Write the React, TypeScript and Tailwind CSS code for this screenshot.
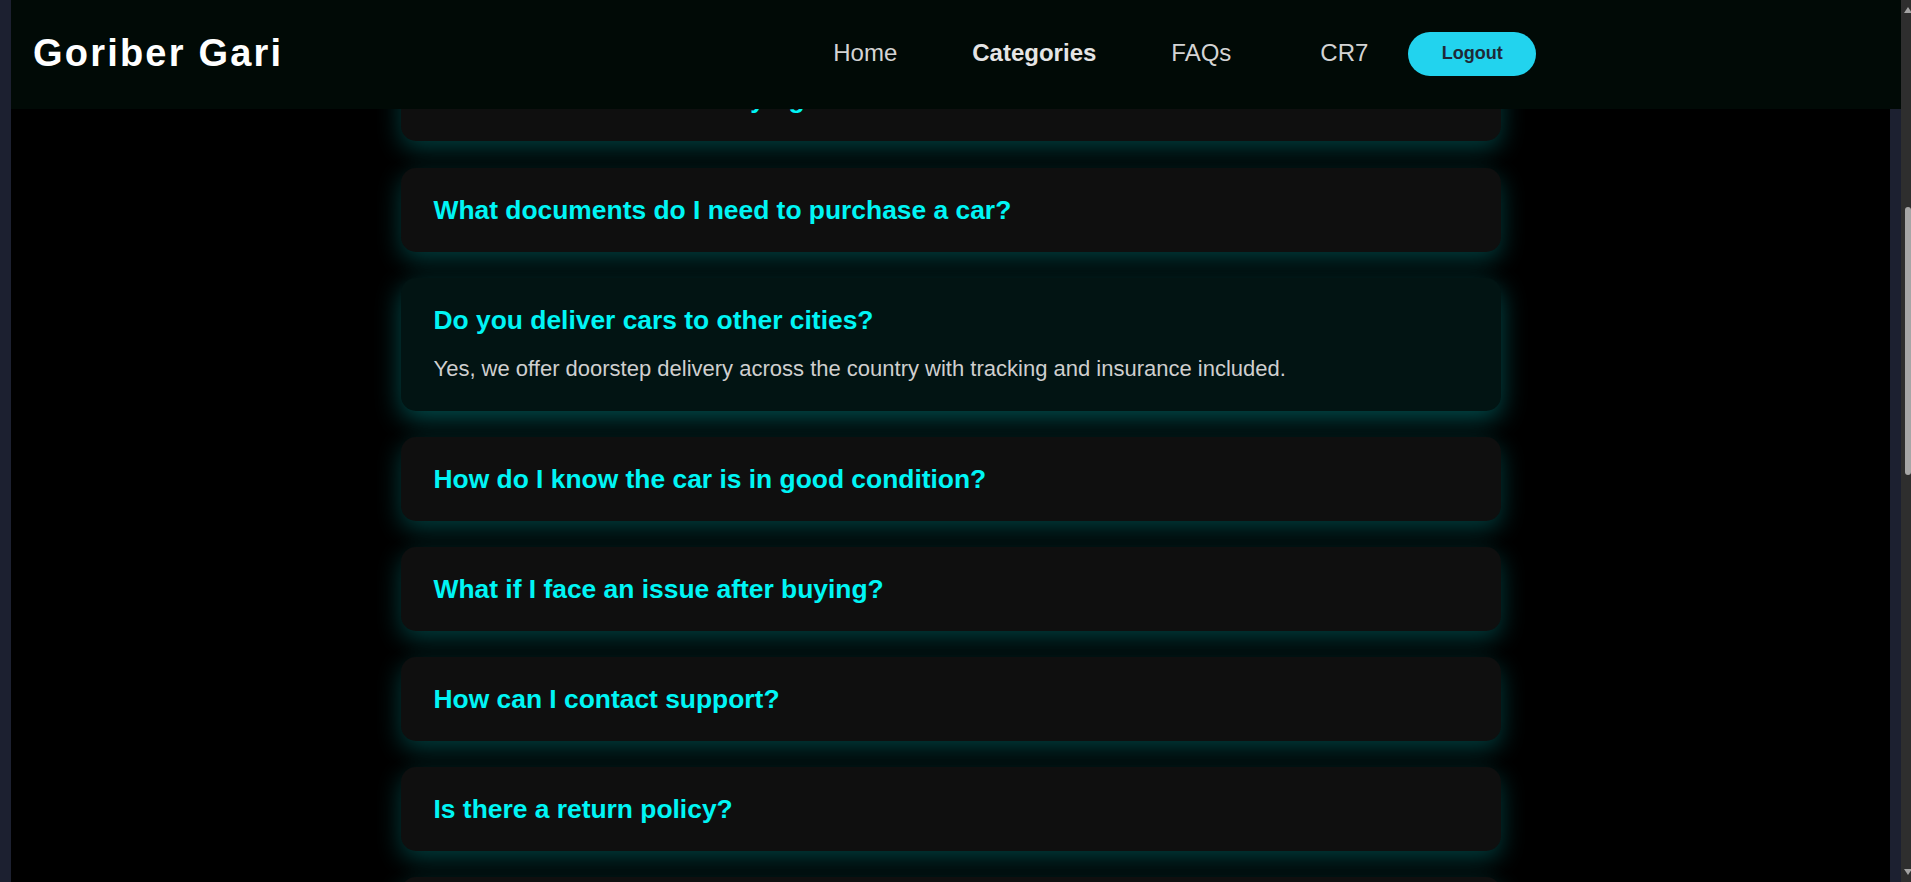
import React from "react";

interface Faq {
  q: string;
  a?: string;
  open?: boolean;
}

const faqs: Faq[] = [
  { q: "Can I test drive before buying?" },
  { q: "What documents do I need to purchase a car?" },
  {
    q: "Do you deliver cars to other cities?",
    a: "Yes, we offer doorstep delivery across the country with tracking and insurance included.",
    open: true,
  },
  { q: "How do I know the car is in good condition?" },
  { q: "What if I face an issue after buying?" },
  { q: "How can I contact support?" },
  { q: "Is there a return policy?" },
  { q: "Do you offer financing options?" },
];

function FaqCard({ item }: { item: Faq }) {
  return (
    <div
      className={[
        "w-[1100px] shrink-0 rounded-[15px] px-[33px] py-[26px] first:mb-px",
        item.open
          ? "bg-[#021413] shadow-[0_8px_26px_rgba(0,255,255,0.3)]"
          : "bg-[#0f0f0f] shadow-[0_8px_24px_rgba(0,255,255,0.24)]",
      ].join(" ")}
    >
      <h3 className="text-[26.4px] leading-[32px] font-bold text-[#00f5f5]">{item.q}</h3>
      {item.open && item.a && (
        <p className="mt-[16px] text-[22px] leading-[33px] text-[#cfcfcf]">{item.a}</p>
      )}
    </div>
  );
}

function Scrollbar() {
  return (
    <div className="relative w-[10px] shrink-0 bg-[#2e2e2e]">
      {/* arrows + thumb */}
      <div className="absolute left-[3px] top-[7px] h-0 w-0 border-b-[6px] border-l-[4px] border-r-[4px] border-b-[#a3a3a3] border-l-transparent border-r-transparent" />
      <div className="absolute left-[4px] top-[207px] h-[268px] w-[6px] rounded-[3px] bg-[#a6a6a6]" />
      <div className="absolute bottom-[7px] left-[3px] h-0 w-0 border-t-[6px] border-l-[4px] border-r-[4px] border-t-[#a3a3a3] border-l-transparent border-r-transparent" />
    </div>
  );
}

export default function App() {
  return (
    <div
      className="flex h-[882px] w-full overflow-hidden bg-[#1c2030] pl-[11px]"
      style={{ fontFamily: '"Liberation Sans", Arial, sans-serif' }}
    >
      <div className="flex min-w-0 flex-1 flex-col">
        {/* Navbar */}
        <header className="relative z-10 flex h-[109px] shrink-0 items-center bg-[#010a06] pb-[2px] pl-[22px]">
          <span className="text-[38px] font-bold tracking-[2.2px] text-white">Goriber Gari</span>
          <nav className="ml-[550px] flex items-center">
            <div className="mb-[1px] flex items-center gap-[75px] text-[24px]">
              <a className="text-[#d4d4d4]">Home</a>
              <a className="font-bold text-[#e5e5e5]">Categories</a>
              <a className="text-[#d4d4d4]">FAQs</a>
            </div>
            <span className="mb-[1px] ml-[89px] text-[24px] text-[#d4d4d4]">CR7</span>
            <button className="ml-[40px] h-[44px] w-[128px] rounded-full bg-[#22d3ee] text-[18px] font-bold text-[#1f2937]">
              Logout
            </button>
          </nav>
        </header>

        {/* Body */}
        <div className="flex min-h-0 flex-1">
          <main className="min-w-0 flex-1 overflow-hidden bg-black">
            <div className="mt-[-52px] flex flex-col items-center gap-[26px]">
              {faqs.map((f) => (
                <FaqCard key={f.q} item={f} />
              ))}
            </div>
          </main>
          <div className="w-[11px] shrink-0" />
        </div>
      </div>
      <Scrollbar />
    </div>
  );
}
